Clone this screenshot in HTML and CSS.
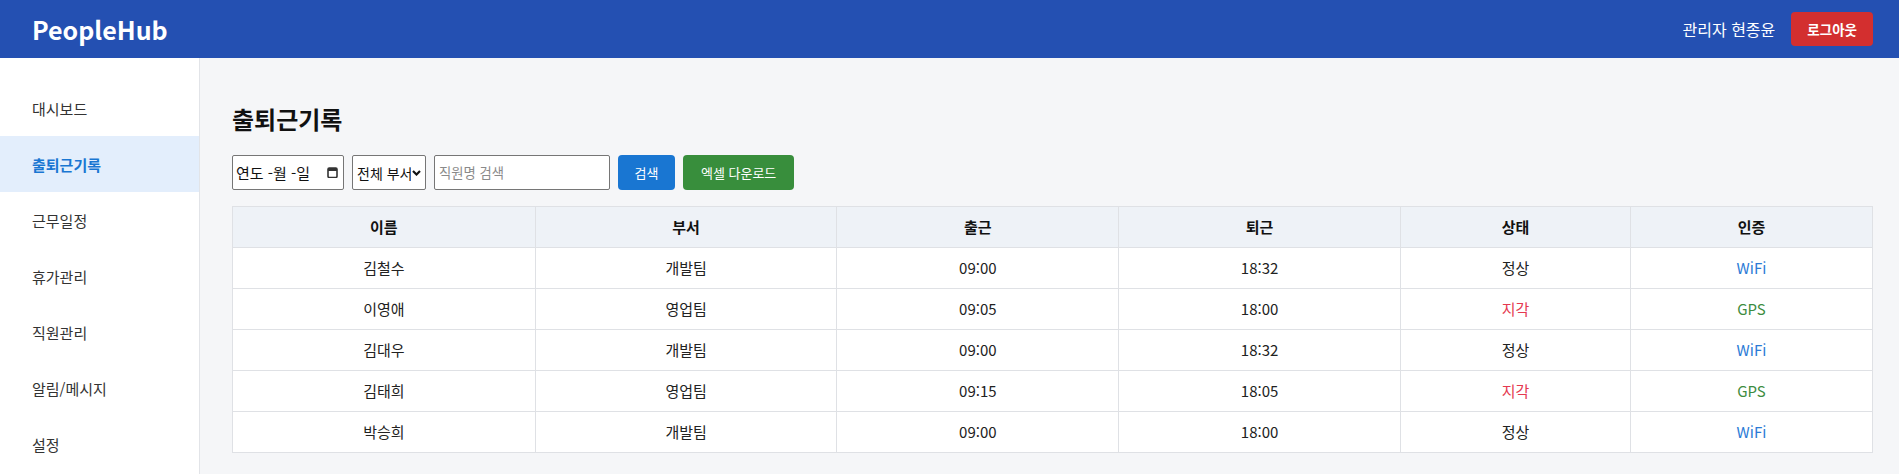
FILE: index.html
```html
<!DOCTYPE html>
<html lang="ko">
<head>
<meta charset="utf-8">
<title>PeopleHub - 출퇴근기록</title>
<link rel="stylesheet" href="styles.css">
</head>
<body>
<header class="topbar">
  <div class="logo">PeopleHub</div>
  <div class="user-area">
    <span class="user-name">관리자 현종윤</span>
    <button class="btn btn-logout">로그아웃</button>
  </div>
</header>
<div class="layout">
  <nav class="sidebar">
    <a class="nav-item">대시보드</a>
    <a class="nav-item active">출퇴근기록</a>
    <a class="nav-item">근무일정</a>
    <a class="nav-item">휴가관리</a>
    <a class="nav-item">직원관리</a>
    <a class="nav-item">알림/메시지</a>
    <a class="nav-item">설정</a>
  </nav>
  <main class="main">
    <h2 class="page-title">출퇴근기록</h2>
    <div class="filters">
      <label class="field field-date">
        <span class="date-text">연도 -월 -일</span>
        <svg class="cal-icon" width="11" height="11" viewBox="0 0 11 11" aria-hidden="true">
          <rect x="1" y="1" width="9" height="9.5" rx="1.2" fill="none" stroke="#333" stroke-width="1.6"/>
          <rect x="1" y="1" width="9" height="3" fill="#333"/>
        </svg>
      </label>
      <div class="select-wrap">
        <select class="field field-select">
          <option>전체 부서</option>
          <option>개발팀</option>
          <option>영업팀</option>
        </select>
        <svg class="chev" width="9" height="6" viewBox="0 0 9 6" aria-hidden="true">
          <path d="M1 1 L4.5 4.5 L8 1" fill="none" stroke="#111" stroke-width="2.2"/>
        </svg>
      </div>
      <input class="field field-text" type="text" placeholder="직원명 검색">
      <button class="btn btn-search">검색</button>
      <button class="btn btn-excel">엑셀 다운로드</button>
    </div>
    <table class="records">
      <colgroup>
        <col class="c-name"><col class="c-dept"><col class="c-in"><col class="c-out"><col class="c-status"><col class="c-auth">
      </colgroup>
      <thead>
        <tr><th>이름</th><th>부서</th><th>출근</th><th>퇴근</th><th>상태</th><th>인증</th></tr>
      </thead>
      <tbody>
        <tr><td>김철수</td><td>개발팀</td><td>09:00</td><td>18:32</td><td>정상</td><td class="wifi">WiFi</td></tr>
        <tr><td>이영애</td><td>영업팀</td><td>09:05</td><td>18:00</td><td class="late">지각</td><td class="gps">GPS</td></tr>
        <tr><td>김대우</td><td>개발팀</td><td>09:00</td><td>18:32</td><td>정상</td><td class="wifi">WiFi</td></tr>
        <tr><td>김태희</td><td>영업팀</td><td>09:15</td><td>18:05</td><td class="late">지각</td><td class="gps">GPS</td></tr>
        <tr><td>박승희</td><td>개발팀</td><td>09:00</td><td>18:00</td><td>정상</td><td class="wifi">WiFi</td></tr>
      </tbody>
    </table>
  </main>
</div>
</body>
</html>
```
FILE: styles.css
```css
* { box-sizing: border-box; }
body {
  margin: 0;
  font-family: "Noto Sans CJK KR", "Noto Sans", sans-serif;
  color: #222;
  background: #f5f6f8;
}
.topbar {
  height: 58px;
  background: #2450b2;
  display: flex;
  align-items: center;
  justify-content: space-between;
  padding: 0 26px 0 32px;
}
.logo {
  color: #fff;
  font-size: 25px;
  font-weight: 700;
}
.user-area {
  display: flex;
  align-items: center;
  gap: 16px;
}
.user-name {
  color: #fff;
  font-size: 16px;
}
.btn {
  border: none;
  border-radius: 4px;
  color: #fff;
  font-family: inherit;
  font-size: 13px;
  height: 35px;
  padding: 0 16px;
  cursor: pointer;
}
.btn-logout {
  background: #d32f2f;
  height: 34px;
  padding: 0 16px;
  font-size: 13.5px;
  font-weight: 700;
}
.btn-search { background: #1976d2; padding: 0 16.5px; }
.btn-excel { background: #388e3c; padding: 0 18px; }
.layout {
  display: flex;
  min-height: calc(100vh - 58px);
}
.sidebar {
  width: 200px;
  flex: 0 0 200px;
  background: #fff;
  border-right: 1px solid #e2e4e8;
  padding-top: 22px;
}
.nav-item {
  display: flex;
  align-items: center;
  height: 56px;
  padding-left: 32px;
  font-size: 15px;
  color: #333;
}
.nav-item.active {
  background: #e3eefc;
  color: #1976d2;
  font-weight: 700;
}
.main {
  flex: 1;
  padding: 32px 26px 32px 32px;
}
.page-title {
  margin: 13px 0 20px;
  font-size: 24px;
  line-height: 32px;
  font-weight: 700;
  color: #111;
}
.filters {
  display: flex;
  gap: 8px;
  margin-bottom: 16px;
}
.field {
  height: 35px;
  font-family: inherit;
  font-size: 13.33px;
  border: 1px solid #767676;
  border-radius: 2px;
  background: #fff;
  color: #111;
}
.field-date {
  width: 112px;
  display: flex;
  align-items: center;
  justify-content: space-between;
  padding: 0 5px 0 3px;
  font-size: 15px;
}
.date-text { white-space: pre; }
.cal-icon { display: block; }
.select-wrap {
  position: relative;
  display: flex;
}
.field-select {
  width: 74px;
  padding: 0 14px 0 4px;
  appearance: none;
  -webkit-appearance: none;
  font-size: 14px;
}
.chev {
  position: absolute;
  right: 5px;
  top: 15px;
  pointer-events: none;
}
.field-text { width: 176px; padding: 0 4px; }
.field-text::placeholder { color: #8a8a8a; }
.records {
  width: 100%;
  border-collapse: collapse;
  background: #fff;
  font-size: 15px;
}
.c-name { width: 18.46%; }
.c-dept { width: 18.4%; }
.c-in { width: 17.18%; }
.c-out { width: 17.18%; }
.c-status { width: 14.02%; }
.c-auth { width: 14.76%; }
.records th,
.records td {
  border: 1px solid #dfe1e5;
  padding: 10px;
  line-height: 20px;
  text-align: center;
}
.records th {
  background: #eef2f7;
  font-weight: 700;
  color: #111;
}
.records td { color: #222; }
.records td.late { color: #e53950; }
.records td.wifi { color: #2b7bd6; }
.records td.gps { color: #3d8c40; }
```
